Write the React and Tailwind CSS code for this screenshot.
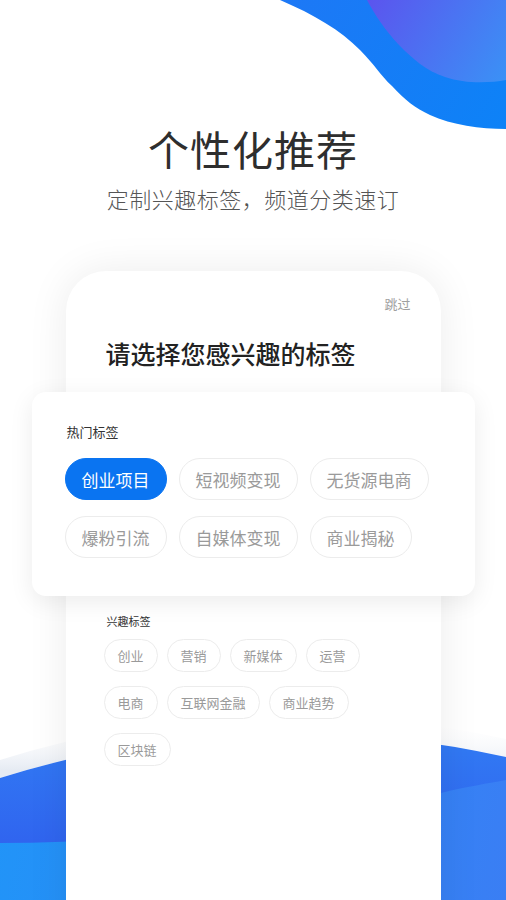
import React, { useState } from 'react';

const hotTags = [
    ['创业项目', '短视频变现', '无货源电商'],
    ['爆粉引流', '自媒体变现', '商业揭秘'],
];

const interestTags = [
    ['创业', '营销', '新媒体', '运营'],
    ['电商', '互联网金融', '商业趋势'],
    ['区块链'],
];

function TopBlob() {
    return (
        <svg className="absolute top-0 left-0" width="506" height="140" viewBox="0 0 506 140">
            <defs>
                <linearGradient id="outer" x1="280" y1="0" x2="506" y2="130" gradientUnits="userSpaceOnUse">
                    <stop offset="0" stopColor="#1d78f6" />
                    <stop offset="1" stopColor="#0d82f7" />
                </linearGradient>
                <linearGradient id="inner" x1="370" y1="0" x2="506" y2="85" gradientUnits="userSpaceOnUse">
                    <stop offset="0" stopColor="#5b55ee" />
                    <stop offset="1" stopColor="#3a92f6" />
                </linearGradient>
            </defs>
            <path d="M280 0 C315 15 340 30 360 50 C375 65 380 75 392 86 C405 100 415 108 430 115 C452 125 480 129 506 129 L506 0 Z" fill="url(#outer)" />
            <path d="M367 0 C375 15 385 30 399 45 C414 60 425 70 445 77 C465 84 490 83 506 80 L506 0 Z" fill="url(#inner)" />
        </svg>
    );
}

function BottomWaves() {
    return (
        <svg className="absolute left-0 top-[700px]" width="506" height="200" viewBox="0 700 506 200">
            <defs>
                <linearGradient id="back" x1="0" y1="750" x2="0" y2="845" gradientUnits="userSpaceOnUse">
                    <stop offset="0" stopColor="#3178f3" />
                    <stop offset="1" stopColor="#3064ef" />
                </linearGradient>
                <linearGradient id="front" x1="0" y1="800" x2="506" y2="900" gradientUnits="userSpaceOnUse">
                    <stop offset="0" stopColor="#2194f8" />
                    <stop offset="1" stopColor="#3a7ef4" />
                </linearGradient>
                <linearGradient id="fade" x1="0" y1="720" x2="0" y2="770" gradientUnits="userSpaceOnUse">
                    <stop offset="0" stopColor="#ffffff" stopOpacity="0" />
                    <stop offset="1" stopColor="#e6ebf3" />
                </linearGradient>
            </defs>
            <path d="M0 760 Q250 682 506 739 L506 760 Q250 700 0 778 Z" fill="url(#fade)" />
            <path d="M0 778 Q250 700 506 757 L506 900 L0 900 Z" fill="url(#back)" />
            <path d="M0 843 C150 843 320 825 441 793 C465 787 490 783 506 780 L506 900 L0 900 Z" fill="url(#front)" />
        </svg>
    );
}

function Tag({ label, active, onClick, small }) {
    const size = small
        ? 'h-[33px] px-[13px] text-[13px]'
        : 'h-[42px] px-4 text-[17px]';
    return (
        <button
            onClick={onClick}
            className={`${size} rounded-full whitespace-nowrap leading-none flex items-center ${
                active ? 'bg-[#0a74f1] text-white border border-[#0a74f1]' : 'bg-white text-[#9a9a9a] border border-[#ececec]'
            }`}
        >
            {label}
        </button>
    );
}

export default function App() {
    const [selected, setSelected] = useState(['创业项目']);

    const toggle = (t) =>
        setSelected((s) => (s.includes(t) ? s.filter((x) => x !== t) : [...s, t]));

    return (
        <div
            className="relative w-[506px] h-[900px] overflow-hidden bg-white"
            style={{ fontFamily: '"Noto Sans CJK SC", "Noto Sans", sans-serif' }}
        >
            <TopBlob />
            <BottomWaves />

            <div className="relative flex flex-col items-center">
                <h1 className="mt-[123px] text-[41px] leading-[50px] font-normal text-[#2e2e2e] tracking-[1px]">个性化推荐</h1>
                <p className="mt-[10px] text-[22px] leading-[30px] font-light text-[#555] tracking-[0.5px]">定制兴趣标签，频道分类速订</p>

                <div className="mt-[58px] w-[375px] h-[700px] bg-white rounded-t-[40px] shadow-[0_0_40px_rgba(0,0,0,0.08)] flex flex-col">
                    <div className="flex justify-end pr-[30px] pt-[24px]">
                        <span className="text-[13px] leading-[18px] text-[#a0a0a0]">跳过</span>
                    </div>
                    <h2 className="pl-[40px] mt-[24px] text-[25px] leading-[32px] font-medium text-[#222]">请选择您感兴趣的标签</h2>

                    <div className="-mx-[34px] mt-[23px] h-[204px] bg-white rounded-[14px] shadow-[0_6px_24px_rgba(0,0,0,0.08)] px-[33px] pt-[32px]">
                        <div className="pl-[2px] text-[13px] leading-[16px] text-[#333]">热门标签</div>
                        <div className="mt-[18px] flex flex-col gap-4">
                            {hotTags.map((row, i) => (
                                <div key={i} className="flex gap-3">
                                    {row.map((t) => (
                                        <Tag key={t} label={t} active={selected.includes(t)} onClick={() => toggle(t)} />
                                    ))}
                                </div>
                            ))}
                        </div>
                    </div>

                    <div className="pl-[38px] pt-[18px]">
                        <div className="pl-[3px] text-[11px] leading-[14px] text-[#333]">兴趣标签</div>
                        <div className="mt-[11px] flex flex-col gap-[14px]">
                            {interestTags.map((row, i) => (
                                <div key={i} className="flex gap-[9px]">
                                    {row.map((t) => (
                                        <Tag key={t} small label={t} active={selected.includes(t)} onClick={() => toggle(t)} />
                                    ))}
                                </div>
                            ))}
                        </div>
                    </div>
                </div>
            </div>
        </div>
    );
}
